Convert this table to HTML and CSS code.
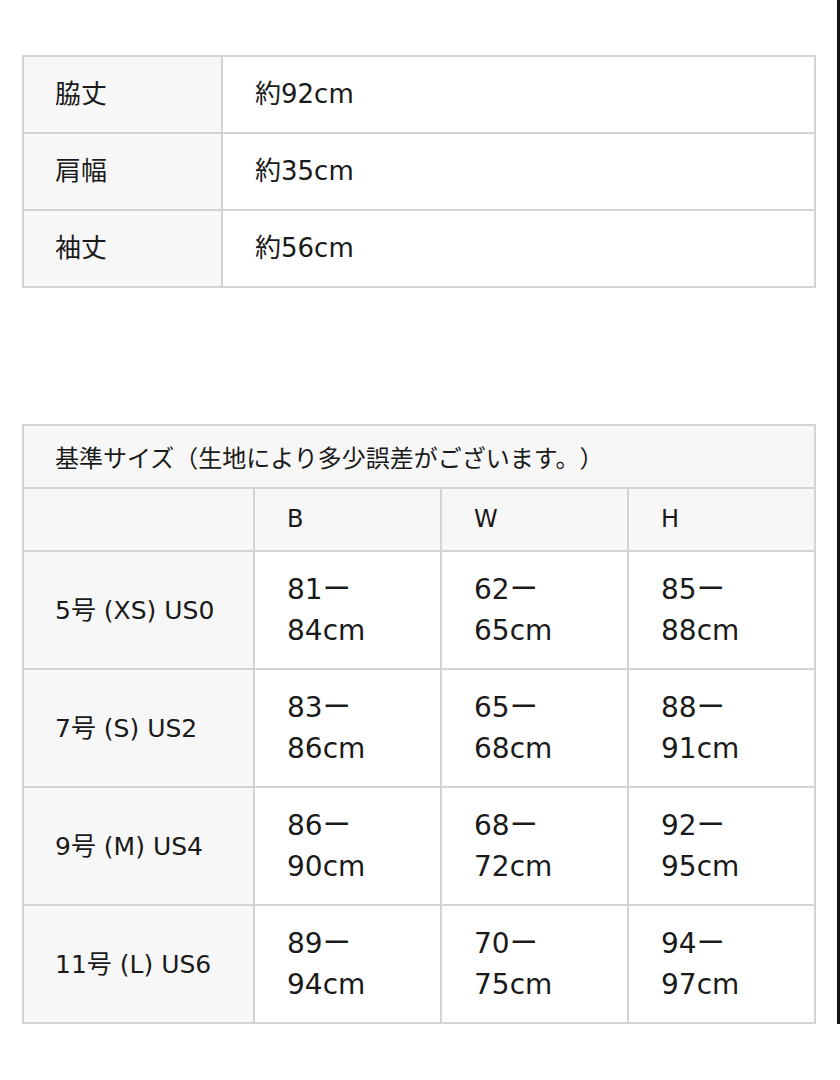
FILE: index.html
```html
<!DOCTYPE html>
<html lang="ja">
<head>
<meta charset="utf-8">
<title>サイズ表</title>
<link rel="stylesheet" href="styles.css">
</head>
<body>
<div class="page">
  <table class="spec">
    <colgroup><col class="spec-key"><col></colgroup>
    <tbody>
      <tr><th>脇丈</th><td>約92cm</td></tr>
      <tr><th>肩幅</th><td>約35cm</td></tr>
      <tr><th>袖丈</th><td>約56cm</td></tr>
    </tbody>
  </table>

  <table class="sizes">
    <colgroup><col class="size-key"><col><col><col></colgroup>
    <thead>
      <tr><th class="caption" colspan="4">基準サイズ（生地により多少誤差がございます。）</th></tr>
      <tr><th class="head"></th><th class="head">B</th><th class="head">W</th><th class="head">H</th></tr>
    </thead>
    <tbody>
      <tr><th>5号 (XS) US0</th><td>81ー<br>84cm</td><td>62ー<br>65cm</td><td>85ー<br>88cm</td></tr>
      <tr><th>7号 (S) US2</th><td>83ー<br>86cm</td><td>65ー<br>68cm</td><td>88ー<br>91cm</td></tr>
      <tr><th>9号 (M) US4</th><td>86ー<br>90cm</td><td>68ー<br>72cm</td><td>92ー<br>95cm</td></tr>
      <tr><th>11号 (L) US6</th><td>89ー<br>94cm</td><td>70ー<br>75cm</td><td>94ー<br>97cm</td></tr>
    </tbody>
  </table>
</div>
</body>
</html>
```
FILE: styles.css
```css
html {
  background: #ffffff;
  border-right: 3px solid #141414;
}
body {
  margin: 0;
  font-family: "DejaVu Sans", "Noto Sans CJK JP", sans-serif;
  color: #1a1a1a;
  text-spacing-trim: space-all;
}
.page {
  padding: 55px 21px 0 22px;
  display: flex;
  flex-direction: column;
  gap: 136px;
}
table {
  width: 100%;
  border-collapse: collapse;
  table-layout: fixed;
  font-size: 26px;
  line-height: 41px;
}
th, td {
  border: 2px solid #d3d3d3;
  text-align: left;
  font-weight: normal;
  padding: 17px 20px 17px 31px;
  vertical-align: middle;
}
th {
  background: #f7f7f7;
}
td {
  background: #ffffff;
}
.spec-key {
  width: 199px;
}
.size-key {
  width: 231px;
}
.sizes th {
  font-size: 25px;
}
.sizes td {
  font-size: 28px;
}
.sizes .caption {
  font-family: "Noto Sans CJK JP", sans-serif;
  font-size: 24px;
}
.sizes .head {
  font-size: 24px;
}
.sizes .caption,
.sizes .head {
  padding-top: 10px;
  padding-bottom: 10px;
}
.sizes td,
.sizes .head + .head,
.spec td {
  padding-left: 32px;
}
```
